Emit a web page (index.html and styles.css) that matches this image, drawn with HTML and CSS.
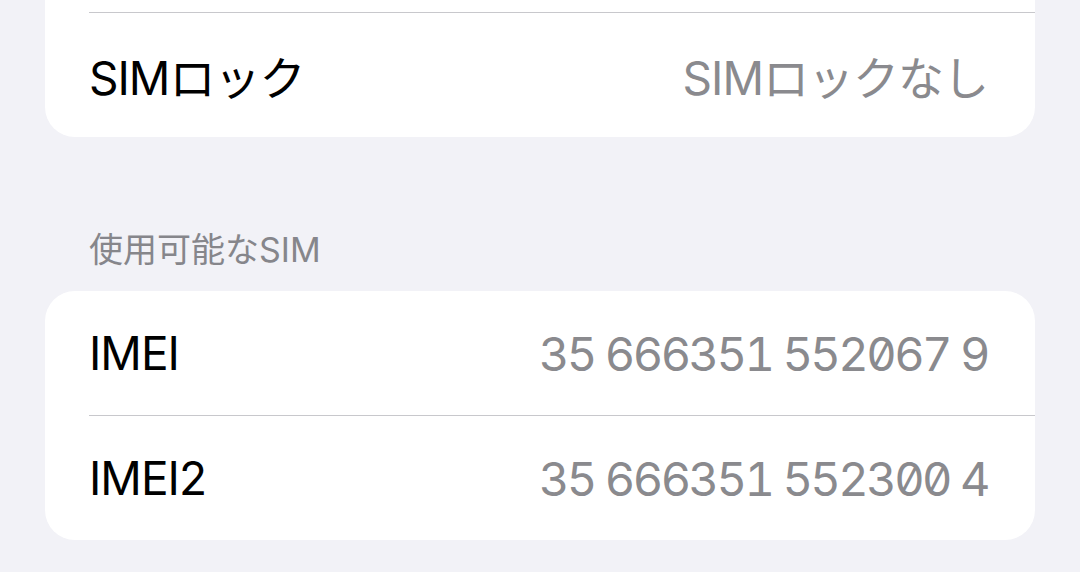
FILE: index.html
```html
<!DOCTYPE html>
<html lang="ja">
<head>
<meta charset="utf-8">
<title>情報</title>
<link rel="stylesheet" href="styles.css">
</head>
<body>
<main class="page">
  <section class="card card--continued">
    <div class="row-stub"></div>
    <div class="row">
      <span class="label">SIMロック</span>
      <span class="value">SIMロックなし</span>
    </div>
  </section>

  <h2 class="section-header">使用可能なSIM</h2>

  <section class="card">
    <div class="row">
      <span class="label">IMEI</span>
      <span class="value value--num">35 666351 552067 9</span>
    </div>
    <div class="row">
      <span class="label">IMEI2</span>
      <span class="value value--num">35 666351 552300 4</span>
    </div>
  </section>
</main>
</body>
</html>
```

FILE: styles.css
```css
html, body {
  margin: 0;
  padding: 0;
}

body {
  background: #f2f2f7;
  font-family: Inter, "Noto Sans CJK JP", sans-serif;
  color: #000;
  width: 1080px;
  height: 572px;
  overflow: hidden;
}

.page {
  padding: 0 45px;
  display: flex;
  flex-direction: column;
}

.card {
  background: #fff;
  border-radius: 30px;
  display: flex;
  flex-direction: column;
}

.card--continued {
  border-top-left-radius: 0;
  border-top-right-radius: 0;
}

.row-stub {
  height: 12px;
}

.row {
  margin-left: 44px;
  padding-right: 47px;
  height: 124px;
  display: flex;
  align-items: center;
  justify-content: space-between;
  font-size: 46px;
  letter-spacing: -1px;
}

.row + .row,
.row-stub + .row {
  border-top: 1px solid #c8c8cc;
}

.label {
  color: #000;
}

.value {
  color: #8a8a8e;
}

.value--num {
  font-size: 47px;
  letter-spacing: -2.55px;
  font-variant-numeric: tabular-nums slashed-zero;
  font-feature-settings: "tnum" 1, "zero" 1;
}

.section-header {
  margin: 93px 0 21px 44px;
  height: 40px;
  line-height: 40px;
  font-size: 34px;
  font-weight: 400;
  color: #86868b;
}
```
